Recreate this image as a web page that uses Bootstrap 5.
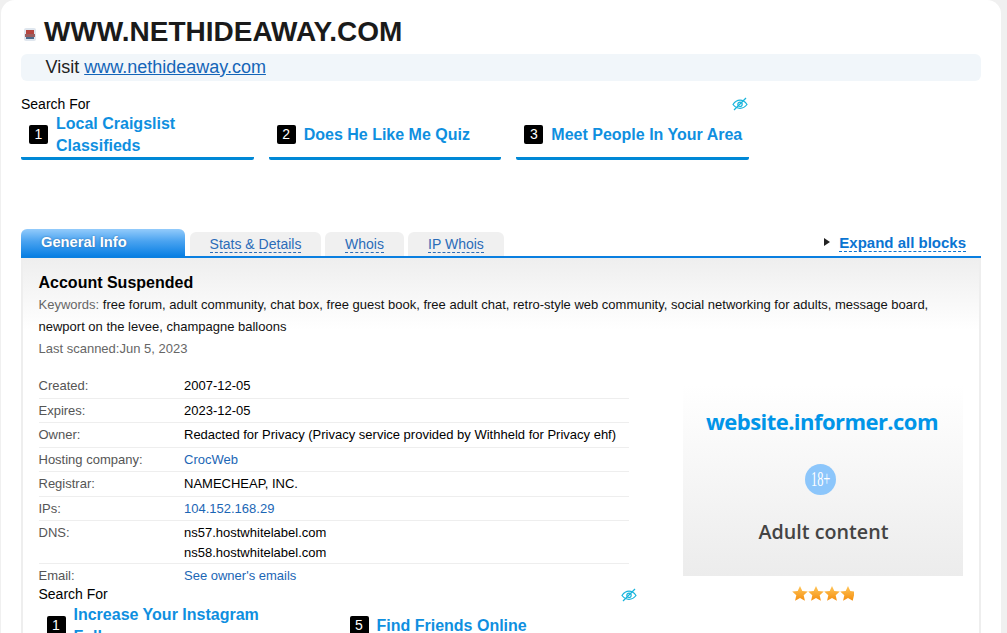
<!DOCTYPE html>
<html lang="en">
<head>
<meta charset="utf-8">
<title>www.nethideaway.com</title>
<link href="https://cdn.jsdelivr.net/npm/bootstrap@5.3.0/dist/css/bootstrap.min.css" rel="stylesheet">
<style>
html,body{height:633px;overflow:hidden;background:#f0f0f0}
body{font-family:"Liberation Sans",Arial,sans-serif;color:#000;padding:0 6px 0 1px}
.sheet{background:#fff;border-radius:14px 14px 0 0;padding:15px 20px 0;height:900px}
.site-title{font-size:28px;font-weight:700;line-height:34px;color:#1a1a1a;margin:0 0 0 -1px}
.fav{width:12px;height:13px;margin:4px 9px 0 3px}
.visit-bar{background:#f1f6fa;border-radius:6px;height:27px;margin-top:5px;padding-left:24.500px;font-size:18px;line-height:26px;color:#222}
.visit-bar a{color:#1565b8}
.ad-head{font-size:14px;line-height:16px;height:16px;width:728px;margin-top:15px}
.ad-row{gap:15px;width:728px}
.ad-cell{width:233px;border-bottom:3px solid #0088d6;border-radius:0 0 2px 2px;height:44px;padding:0 2px 4px 8px;gap:8px;margin-top:4px}
.ad-num{flex:0 0 19px;height:19px;background:#000;color:#fff;border-radius:2px;font-size:14px;line-height:19px;text-align:center}
.ad-link{font-size:16px;font-weight:700;line-height:22px;color:#0f8fdf;text-decoration:none}
.eye{width:16px;height:14px;margin-top:1px}
.eye-top{margin-right:1px}
.eye-low{margin-top:2px}
.tabs-line{margin-top:69px;height:29px;border-bottom:2px solid #0a7fe0;padding:0}
.tab-main{width:164px;height:27px;margin:0 5px 0 0;border-radius:6px 6px 0 0;background:linear-gradient(#93cbfb,#4aa3f0 45%,#0a80e4);color:#fff;font-weight:700;font-size:14.700px;line-height:27px;padding-left:20px;text-shadow:0 0 2px #2a6aa5}
.tab-other{height:24px;margin:3px 4px 0 0;border-radius:6px 6px 0 0;background:#f0f0f0;font-size:14px;line-height:24px;text-align:center}
.tab-other span{color:#2b6cb8;border-bottom:1px dashed #2b6cb8}
.tab-a{width:131px}.tab-b{width:79px}.tab-c{width:96px}
.expand{font-size:15px;font-weight:700;line-height:17px;color:#0a74d2;border-bottom:1px dashed #0a74d2;margin-right:15px;margin-top:5px;height:18px}
.arrow{width:0;height:0;border-left:6px solid #222;border-top:4.500px solid transparent;border-bottom:4.500px solid transparent;margin:9px 9px 0 0}
.panel-box{border:solid #eee;border-width:0 2px;background:linear-gradient(#eee,#fff 72px);padding:15px 16px 0 15.500px;background-repeat:no-repeat}
.acct{font-size:16px;font-weight:700;line-height:20px;margin:0 0 1px}
.kw{font-size:13px;line-height:22px;color:#111;margin:0}
.kw i,.scan{font-style:normal;color:#666}
.scan{font-size:13px;line-height:22px}
.left-col{flex:none;width:590px}
.info-col{margin-top:14px}
.info-row{display:flex;border-bottom:1px solid #eee;font-size:13px;line-height:16px;padding:4px 0 3.500px}
.info-row.plain{border:0}
.info-row.dns{padding-bottom:2px}
.second-line{display:block;margin-top:4px}
.info-row .lab{width:145.500px;color:#555;flex:none}
.info-row a{color:#1b66b5;text-decoration:none}
.pic-col{flex:none;width:280px;margin:25px 0 0 54px}
.pic-box{height:191px;background:linear-gradient(#fff,#ececec);text-align:center;padding-top:21px;padding-right:1px}
.brand{font-family:"Open Sans",sans-serif;font-weight:700;font-size:22px;line-height:30px;color:#0095e8;letter-spacing:-.55px}
.age{width:31px;height:31px;border-radius:50%;background:#8cc6fb;color:#fff;margin:28px 0 0 122px;font-size:20px;line-height:31px;font-family:"Liberation Serif",serif;text-align:center}
.age-txt{display:inline-block;transform:scaleX(.62)}
.adult{font-family:"Open Sans",sans-serif;font-weight:600;font-size:19.700px;line-height:28px;color:#444;margin-top:23px;padding-left:3px}
.stars{margin-top:10px;height:16px}
.stars svg{width:16px;height:15px}
.stars svg.cut{width:14px}
.low-ads{margin-top:-2px;width:598px}
.low-head{font-size:14px;line-height:16px}
.low-row{gap:15px;margin-top:2px}
.low-cell{width:288px;padding:0 8px;gap:8px}
</style>
</head>
<body>
<div class="sheet">
  <div class="d-flex align-items-center">
    <svg class="fav" viewBox="0 0 12 13"><rect x="0" y="0" width="12" height="13" rx="2" fill="#dfe6ee"/><rect x="2" y="2" width="8" height="4" fill="#b5453f"/><rect x="1" y="6" width="10" height="3" fill="#9a5f60"/><rect x="2" y="9" width="8" height="2" fill="#4d6a8a"/></svg>
    <h1 class="site-title">WWW.NETHIDEAWAY.COM</h1>
  </div>
  <div class="visit-bar">Visit <a href="#">www.nethideaway.com</a></div>

  <div class="ad-head d-flex justify-content-between align-items-start">
    <span>Search For</span>
    <svg class="eye eye-top" viewBox="0 0 16 14" fill="none" stroke="#17b4dc" stroke-width="1.2"><path d="M1 7.500C3 4.500 5.500 3.200 8 3.200s5 1.300 7 4.300c-2 2.600-4.500 3.800-7 3.800S3 10.100 1 7.500z"/><circle cx="8" cy="7.300" r="2.200"/><path d="M14 1 2 13"/></svg>
  </div>
  <div class="ad-row d-flex">
    <div class="ad-cell d-flex align-items-center"><span class="ad-num">1</span><a class="ad-link" href="#">Local Craigslist Classifieds</a></div>
    <div class="ad-cell d-flex align-items-center"><span class="ad-num">2</span><a class="ad-link" href="#">Does He Like Me Quiz</a></div>
    <div class="ad-cell d-flex align-items-center"><span class="ad-num">3</span><a class="ad-link" href="#">Meet People In Your Area</a></div>
  </div>

  <div class="tabs-line d-flex">
    <div class="tab-main">General Info</div>
    <div class="tab-other tab-a"><span>Stats &amp; Details</span></div>
    <div class="tab-other tab-b"><span>Whois</span></div>
    <div class="tab-other tab-c"><span>IP Whois</span></div>
    <div class="ms-auto d-flex"><i class="arrow"></i><div class="expand">Expand all blocks</div></div>
  </div>

  <div class="panel-box">
    <h2 class="acct">Account Suspended</h2>
    <p class="kw"><i>Keywords:</i> free forum, adult community, chat box, free guest book, free adult chat, retro-style web community, social networking for adults, message board, newport on the levee, champagne balloons</p>
    <div class="scan">Last scanned:Jun 5, 2023</div>
    <div class="d-flex align-items-start">
      <div class="left-col">
        <div class="info-col">
          <div class="info-row"><span class="lab">Created:</span><span>2007-12-05</span></div>
          <div class="info-row"><span class="lab">Expires:</span><span>2023-12-05</span></div>
          <div class="info-row"><span class="lab">Owner:</span><span>Redacted for Privacy (Privacy service provided by Withheld for Privacy ehf)</span></div>
          <div class="info-row"><span class="lab">Hosting company:</span><a href="#">CrocWeb</a></div>
          <div class="info-row"><span class="lab">Registrar:</span><span>NAMECHEAP, INC.</span></div>
          <div class="info-row"><span class="lab">IPs:</span><a href="#">104.152.168.29</a></div>
          <div class="info-row dns"><span class="lab">DNS:</span><span>ns57.hostwhitelabel.com<span class="second-line">ns58.hostwhitelabel.com</span></span></div>
          <div class="info-row plain"><span class="lab">Email:</span><a href="#">See owner's emails</a></div>
        </div>
        <div class="low-ads">
          <div class="low-head d-flex justify-content-between align-items-start"><span>Search For</span>
            <svg class="eye eye-low" viewBox="0 0 16 14" fill="none" stroke="#17b4dc" stroke-width="1.2"><path d="M1 7.500C3 4.500 5.500 3.200 8 3.200s5 1.300 7 4.300c-2 2.600-4.500 3.800-7 3.800S3 10.100 1 7.500z"/><circle cx="8" cy="7.300" r="2.200"/><path d="M14 1 2 13"/></svg>
          </div>
          <div class="low-row d-flex">
            <div class="low-cell d-flex align-items-center"><span class="ad-num">1</span><a class="ad-link" href="#">Increase Your Instagram Followers</a></div>
            <div class="low-cell d-flex align-items-center"><span class="ad-num">5</span><a class="ad-link" href="#">Find Friends Online</a></div>
          </div>
        </div>
      </div>
      <div class="pic-col">
        <div class="pic-box">
          <div class="brand">website.informer.com</div>
          <div class="age"><span class="age-txt">18+</span></div>
          <div class="adult">Adult content</div>
        </div>
        <div class="stars d-flex justify-content-center">
          <svg viewBox="0 0 16 15"><defs><linearGradient id="sg" x1="0" y1="0" x2="0" y2="1"><stop offset="0" stop-color="#ffc65a"/><stop offset="1" stop-color="#f58f0f"/></linearGradient></defs><path fill="url(#sg)" d="M8 0l2.300 5 5.500.6-4.100 3.700 1.200 5.400L8 12l-4.900 2.700 1.200-5.400L.2 5.600 5.700 5z"/></svg>
          <svg viewBox="0 0 16 15"><path fill="url(#sg)" d="M8 0l2.300 5 5.500.6-4.100 3.700 1.200 5.400L8 12l-4.900 2.700 1.200-5.400L.2 5.600 5.700 5z"/></svg>
          <svg viewBox="0 0 16 15"><path fill="url(#sg)" d="M8 0l2.300 5 5.500.6-4.100 3.700 1.200 5.400L8 12l-4.900 2.700 1.200-5.400L.2 5.600 5.700 5z"/></svg>
          <svg class="cut" viewBox="0 0 14 15"><path fill="url(#sg)" d="M8 0l2.300 5 3.700.6v3.700l-1.300 5.400L8 12l-4.900 2.700 1.200-5.400L.2 5.600 5.700 5z"/></svg>
        </div>
      </div>
    </div>
  </div>
</div>
</body>
</html>
